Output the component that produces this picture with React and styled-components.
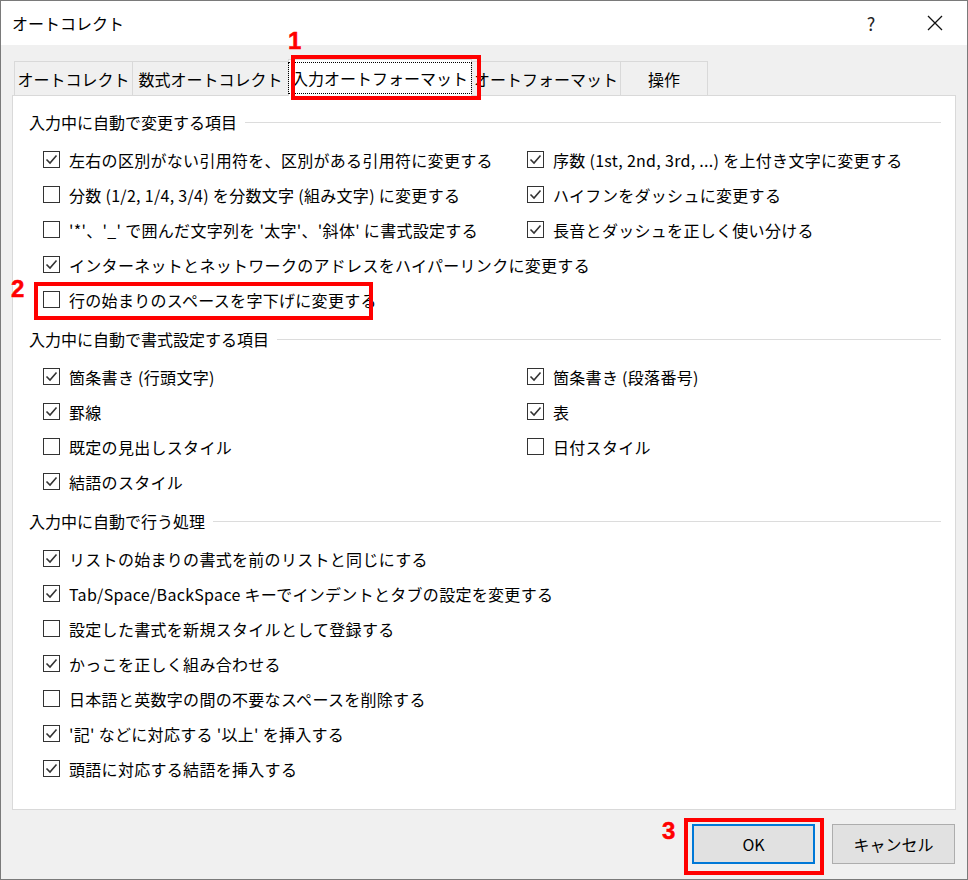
import React from "react"
import styled, { createGlobalStyle } from "styled-components"

const Global = createGlobalStyle`
  html, body { margin: 0; padding: 0; background: #f0f0f0; }
  body { font-family: "Noto Sans CJK JP", "Liberation Sans", sans-serif; color: #000; }
`;

const Win = styled.div`
  position: relative;
  width: 968px;
  height: 880px;
  box-sizing: border-box;
  border: 1px solid #7a7a7a;
  background: #f0f0f0;
  display: flex;
  flex-direction: column;
`;

const TitleBar = styled.div`
  height: 44px;
  background: #fff;
  display: flex;
  align-items: center;
  padding-left: 11px;
  font-size: 16px;
`;

const TitleText = styled.div` flex: 1; `;

const TitleBtn = styled.div`
  width: 64px;
  text-align: center;
  font-size: 18px;
  color: #222;
`;

const Body = styled.div`
  padding: 14px 11px 0 11px;
  display: flex;
  flex-direction: column;
`;

const Tabs = styled.div`
  display: flex;
  height: 37px;
  align-items: flex-end;
  padding-left: 2px;
`;

const Tab = styled.div`
  box-sizing: border-box;
  width: ${({ w }) => w}px;
  height: ${({ active }) => (active ? "37px" : "35px")};
  display: flex;
  align-items: center;
  justify-content: center;
  font-size: 16px;
  white-space: nowrap;
  background: ${({ active }) => (active ? "#fff" : "#f0f0f0")};
  border: 1px solid #d9d9d9;
  border-bottom: ${({ active }) => (active ? "none" : "1px solid #d9d9d9")};
  margin-left: ${({ first }) => (first ? "0" : "-1px")};
  position: relative;
  z-index: ${({ active }) => (active ? 2 : 1)};
`;

const Focus = styled.span`
  outline: 1px dotted #000;
  outline-offset: 3px;
`;

const Panel = styled.div`
  background: #fff;
  border: 1px solid #d9d9d9;
  height: 715px;
  box-sizing: border-box;
  padding: 14px 14px 0 16px;
  margin-top: -1px;
`;

const GroupHead = styled.div`
  display: flex;
  align-items: center;
  gap: 8px;
  font-size: 16px;
  height: 24px;
  margin-bottom: 8px;
  &::after {
    content: "";
    flex: 1;
    border-top: 1px solid #dcdcdc;
  }
`;

const Grid = styled.div`
  display: grid;
  grid-template-columns: 484px 1fr;
  padding-left: 14px;
  margin-bottom: 10px;
`;

const Row = styled.div`
  display: flex;
  align-items: center;
  height: 35px;
  font-size: 16px;
  letter-spacing: 0.3px;
  white-space: nowrap;
  grid-column: ${({ wide }) => (wide ? "1 / span 2" : "auto")};
`;

const Box = styled.span`
  width: 17px;
  height: 17px;
  box-sizing: border-box;
  border: 1px solid #333;
  margin-right: 9px;
  display: inline-flex;
  align-items: center;
  justify-content: center;
  flex: none;
`;

const Check = ({ on }) => (
  <Box>
    {on && (
      <svg width="13" height="13" viewBox="0 0 13 13">
        <path d="M1.5 6.5 L5 10 L11.5 2.5" fill="none" stroke="#333" strokeWidth="1.6" />
      </svg>
    )}
  </Box>
);

const Item = ({ on, children, wide }) => (
  <Row wide={wide}>
    <Check on={on} />
    {children}
  </Row>
);

const Footer = styled.div`
  display: flex;
  justify-content: flex-end;
  gap: 17px;
  padding: 14px 1px 0 0;
`;

const Button = styled.div`
  width: 123px;
  height: 40px;
  box-sizing: border-box;
  background: #e1e1e1;
  border: ${({ primary }) => (primary ? "2px solid #0078d7" : "1px solid #adadad")};
  display: flex;
  align-items: center;
  justify-content: center;
  font-size: 16px;
`;

const Mark = styled.div`
  position: absolute;
  z-index: 10;
  border: 4px solid #f00;
  box-sizing: border-box;
  pointer-events: none;
`;

const Num = styled.div`
  position: absolute;
  z-index: 10;
  color: #f00;
  font-family: "Liberation Sans", sans-serif;
  font-weight: bold;
  font-size: 24px;
  -webkit-text-stroke: 0.5px #f00;
  text-shadow: 0 0 2px #fff, 0 0 2px #fff;
`;

export default function App() {
  return (
    <>
      <Global />
      <Win>
        <TitleBar>
          <TitleText>オートコレクト</TitleText>
          <TitleBtn>?</TitleBtn>
          <TitleBtn>
            <svg width="16" height="16" viewBox="0 0 16 16">
              <path d="M1 1 L15 15 M15 1 L1 15" stroke="#111" strokeWidth="1.3" />
            </svg>
          </TitleBtn>
        </TitleBar>
        <Body>
          <Tabs>
            <Tab first w={119}>オートコレクト</Tab>
            <Tab w={157}>数式オートコレクト</Tab>
            <Tab active w={184}><Focus>入力オートフォーマット</Focus></Tab>
            <Tab w={150}>オートフォーマット</Tab>
            <Tab w={88}>操作</Tab>
          </Tabs>
          <Panel>
            <GroupHead>入力中に自動で変更する項目</GroupHead>
            <Grid>
              <Item on>左右の区別がない引用符を、区別がある引用符に変更する</Item>
              <Item on>序数 (1st, 2nd, 3rd, ...) を上付き文字に変更する</Item>
              <Item>分数 (1/2, 1/4, 3/4) を分数文字 (組み文字) に変更する</Item>
              <Item on>ハイフンをダッシュに変更する</Item>
              <Item>'*'、'_' で囲んだ文字列を '太字'、'斜体' に書式設定する</Item>
              <Item on>長音とダッシュを正しく使い分ける</Item>
              <Item on wide>インターネットとネットワークのアドレスをハイパーリンクに変更する</Item>
              <Item wide>行の始まりのスペースを字下げに変更する</Item>
            </Grid>
            <GroupHead>入力中に自動で書式設定する項目</GroupHead>
            <Grid>
              <Item on>箇条書き (行頭文字)</Item>
              <Item on>箇条書き (段落番号)</Item>
              <Item on>罫線</Item>
              <Item on>表</Item>
              <Item>既定の見出しスタイル</Item>
              <Item>日付スタイル</Item>
              <Item on wide>結語のスタイル</Item>
            </Grid>
            <GroupHead>入力中に自動で行う処理</GroupHead>
            <Grid>
              <Item on wide>リストの始まりの書式を前のリストと同じにする</Item>
              <Item on wide>Tab/Space/BackSpace キーでインデントとタブの設定を変更する</Item>
              <Item wide>設定した書式を新規スタイルとして登録する</Item>
              <Item on wide>かっこを正しく組み合わせる</Item>
              <Item wide>日本語と英数字の間の不要なスペースを削除する</Item>
              <Item on wide>'記' などに対応する '以上' を挿入する</Item>
              <Item on wide>頭語に対応する結語を挿入する</Item>
            </Grid>
          </Panel>
          <Footer>
            <Button primary>OK</Button>
            <Button>キャンセル</Button>
          </Footer>
        </Body>
        <Mark style={{ left: 290, top: 54, width: 190, height: 45 }} />
        <Num style={{ left: 287, top: 26 }}>1</Num>
        <Mark style={{ left: 33, top: 281, width: 339, height: 38 }} />
        <Num style={{ left: 10, top: 274 }}>2</Num>
        <Mark style={{ left: 683, top: 817, width: 140, height: 57 }} />
        <Num style={{ left: 661, top: 816 }}>3</Num>
      </Win>
    </>
  );
}
